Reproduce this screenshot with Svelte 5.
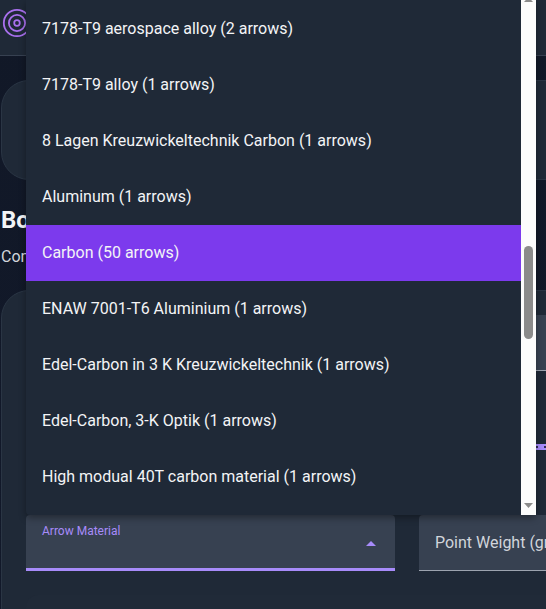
<script>
  const options = [
    '7178-T9 aerospace alloy (2 arrows)',
    '7178-T9 alloy (1 arrows)',
    '8 Lagen Kreuzwickeltechnik Carbon (1 arrows)',
    'Aluminum (1 arrows)',
    'Carbon (50 arrows)',
    'ENAW 7001-T6 Aluminium (1 arrows)',
    'Edel-Carbon in 3 K Kreuzwickeltechnik (1 arrows)',
    'Edel-Carbon, 3-K Optik (1 arrows)',
    'High modual 40T carbon material (1 arrows)'
  ];
  let selected = $state('Carbon (50 arrows)');
</script>

<div class="page">
  <header>
    <svg class="logo" width="30" height="30" viewBox="0 0 30 30" fill="none" stroke="#a970ee" stroke-width="1.8">
      <circle cx="15" cy="15" r="13.2" />
      <circle cx="15" cy="15" r="8.1" />
      <circle cx="15" cy="15" r="2.8" />
    </svg>
  </header>
  <main>
    <section class="card intro"></section>
    <h2>Bow</h2>
    <p>Configure</p>
    <section class="card form">
      <div class="grid">
        <div class="blank"></div>
        <div class="field"></div>
      </div>
      <div class="grid sliders">
        <div class="blank"></div>
        <div class="slider"></div>
      </div>
      <div class="grid selects">
        <div class="field focus">
          <span class="label">Arrow Material</span>
          <svg class="caret" width="10" height="5" viewBox="0 0 10 5"><path d="M0 5 5 0l5 5z" fill="#a78bfa" /></svg>
        </div>
        <div class="field">
          <span class="placeholder">Point Weight (grains)</span>
        </div>
      </div>
      <div class="panel"></div>
    </section>
  </main>

  <div class="menu" role="listbox">
    <ul>
      {#each options as option}
        <li>
          <button
            role="option"
            aria-selected={option === selected}
            class:selected={option === selected}
            onclick={() => (selected = option)}>{option}</button>
        </li>
      {/each}
    </ul>
    <div class="scrollbar">
      <svg class="arrow" width="9" height="5" viewBox="0 0 9 5"><path d="M0 5 4.5 0 9 5z" fill="#8b8b8b" /></svg>
      <div class="thumb"></div>
      <svg class="arrow" width="9" height="5" viewBox="0 0 9 5"><path d="M0 0h9L4.500 5z" fill="#8b8b8b" /></svg>
    </div>
  </div>
</div>

<style>
  .page {
    position: relative;
    width: 546px;
    height: 609px;
    overflow: hidden;
    font-family: Roboto, sans-serif;
    color: #f3f4f6;
    background: linear-gradient(180deg, #111827, #12192a);
  }
  header {
    box-sizing: border-box;
    height: 56px;
    padding: 8px 2px;
    background: #1f2937;
    border-bottom: 1px solid #374151;
  }
  .logo {
    display: block;
  }
  main {
    padding: 24px 0 0 1px;
    width: 814px;
  }
  .card {
    box-sizing: border-box;
    background: #1f2937;
    border: 1px solid #2a3544;
    border-radius: 28px;
  }
  .intro {
    height: 100px;
  }
  h2 {
    margin: 24px 0 0;
    font-size: 24px;
    line-height: 32px;
    font-weight: 700;
  }
  p {
    margin: 9px 0 21px;
    font-size: 16px;
    line-height: 24px;
    color: #d1d5db;
  }
  .form {
    height: 420px;
    padding: 24px;
    overflow: hidden;
  }
  .grid {
    display: grid;
    grid-template-columns: 369px 369px;
    column-gap: 24px;
  }
  .field {
    box-sizing: border-box;
    height: 56px;
    padding: 0 16px;
    display: flex;
    align-items: center;
    background: #374151;
    border-bottom: 1px solid #9ca3af;
    border-radius: 4px 4px 0 0;
  }
  .sliders {
    margin-top: 73px;
  }
  .slider {
    height: 6px;
    border-radius: 3px;
    background:
      repeating-linear-gradient(90deg, #302a55 0 2px, transparent 2px 8px) 117px 2px / 249px 2px no-repeat,
      #a78bfa;
  }
  .selects {
    margin-top: 65px;
  }
  .focus {
    justify-content: space-between;
    padding-right: 19px;
    border-bottom: 3px solid #a78bfa;
  }
  .caret {
    margin-top: 4px;
  }
  .label {
    align-self: flex-start;
    margin-top: 8px;
    font-size: 12px;
    line-height: 16px;
    color: #a78bfa;
  }
  .placeholder {
    font-size: 16px;
    white-space: nowrap;
    color: #d1d5db;
  }
  .panel {
    height: 60px;
    margin-top: 24px;
    border-radius: 12px;
    background: #202a38;
  }
  .menu {
    position: absolute;
    top: 0;
    left: 26px;
    display: flex;
    width: 510px;
    height: 515px;
    background: #1f2937;
    border-radius: 0 0 4px 4px;
    box-shadow: 0 3px 7px rgba(0, 0, 0, 0.35);
  }
  ul {
    flex: 1;
    margin: 0;
    padding: 1px 0 0;
    list-style: none;
  }
  button {
    display: block;
    box-sizing: border-box;
    width: 100%;
    height: 56px;
    padding: 0 16px 2px;
    border: 0;
    background: none;
    color: #f3f4f6;
    font: 16px Roboto, sans-serif;
    text-align: left;
    white-space: nowrap;
  }
  button.selected {
    background: #7c3aed;
  }
  .scrollbar {
    box-sizing: border-box;
    width: 15px;
    padding: 0 3px 7px;
    display: flex;
    flex-direction: column;
    background: #fcfcfc;
  }
  .scrollbar .arrow:first-child {
    margin-top: -3px;
  }
  .arrow {
    display: block;
  }
  .thumb {
    height: 93px;
    margin: 244px 0 auto;
    border-radius: 5px;
    background: #8b8b8b;
  }
</style>
